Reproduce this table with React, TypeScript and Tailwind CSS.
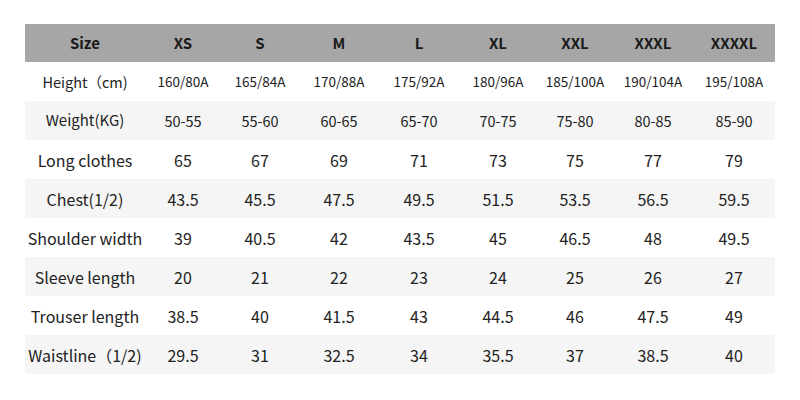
const sizes = ['XS', 'S', 'M', 'L', 'XL', 'XXL', 'XXXL', 'XXXXL'];

type Row = { label: string; values: string[]; labelCls: string; valueCls: string };

const rows: Row[] = [
  { label: 'Height（cm)', values: ['160/80A', '165/84A', '170/88A', '175/92A', '180/96A', '185/100A', '190/104A', '195/108A'], labelCls: 'text-[14.5px]', valueCls: 'text-[13.5px]' },
  { label: 'Weight(KG)', values: ['50-55', '55-60', '60-65', '65-70', '70-75', '75-80', '80-85', '85-90'], labelCls: 'text-[15px]', valueCls: 'text-[14.5px]' },
  { label: 'Long clothes', values: ['65', '67', '69', '71', '73', '75', '77', '79'], labelCls: 'text-[16px]', valueCls: 'text-[16px]' },
  { label: 'Chest(1/2)', values: ['43.5', '45.5', '47.5', '49.5', '51.5', '53.5', '56.5', '59.5'], labelCls: 'text-[16px]', valueCls: 'text-[16px]' },
  { label: 'Shoulder width', values: ['39', '40.5', '42', '43.5', '45', '46.5', '48', '49.5'], labelCls: 'text-[16px]', valueCls: 'text-[16px]' },
  { label: 'Sleeve length', values: ['20', '21', '22', '23', '24', '25', '26', '27'], labelCls: 'text-[16px]', valueCls: 'text-[16px]' },
  { label: 'Trouser length', values: ['38.5', '40', '41.5', '43', '44.5', '46', '47.5', '49'], labelCls: 'text-[16px]', valueCls: 'text-[16px]' },
  { label: 'Waistline（1/2)', values: ['29.5', '31', '32.5', '34', '35.5', '37', '38.5', '40'], labelCls: 'text-[16px]', valueCls: 'text-[16px]' },
];

const cols = 'grid grid-cols-[120px_76px_78px_80px_80px_78px_76px_80px_82px]';

export default function App() {
  return (
    <div
      className="w-[800px] h-[400px] bg-white pt-6 px-[25px] text-[#222]"
      style={{ fontFamily: '"Noto Sans CJK SC", "Noto Sans", sans-serif' }}
    >
      {/* header */}
      <div className={`${cols} h-[38px] items-center bg-[#a6a6a6] text-[15px] font-bold text-[#1a1a1a]`}>
        <div className="text-center">Size</div>
        {sizes.map((s) => (
          <div key={s} className="text-center">{s}</div>
        ))}
      </div>

      {rows.map((row, i) => (
        <div
          key={row.label}
          className={`${cols} h-[39px] items-center ${i % 2 === 1 ? 'bg-[#f5f5f5]' : 'bg-white'}`}
        >
          <div className={`text-center whitespace-nowrap ${row.labelCls}`}>{row.label}</div>
          {row.values.map((v, j) => (
            <div key={j} className={`text-center whitespace-nowrap ${row.valueCls}`}>
              {v}
            </div>
          ))}
        </div>
      ))}
    </div>
  );
}
